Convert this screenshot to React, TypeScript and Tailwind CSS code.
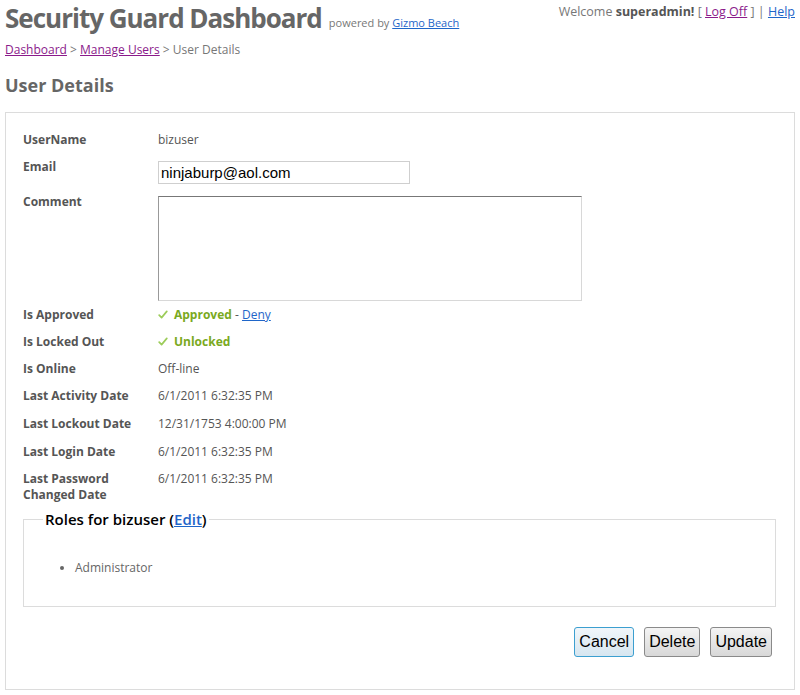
import { useState } from 'react'

const font = { fontFamily: '"Open Sans", "Noto Sans", sans-serif' }

const labelCls = 'text-[12px] font-bold text-[#555] leading-[18px]'
const valueCls = 'text-[12px] text-[#555] leading-[18px]'

function Check() {
  return (
    <svg width="10" height="9" viewBox="0 0 10 9" className="inline-block mr-[6px] -mt-[2px]">
      <path d="M1.2 5.2 L3.6 7.6 L8.8 1.4" fill="none" stroke="#9ccc5a" strokeWidth="1.7" strokeLinecap="round" strokeLinejoin="round" />
    </svg>
  )
}

function Row({ label, children, h }: { label: React.ReactNode; children: React.ReactNode; h: string }) {
  return (
    <div className={`flex ${h}`}>
      <div className={`w-[135px] shrink-0 ${labelCls}`}>{label}</div>
      <div className={`flex-1 ${valueCls}`}>{children}</div>
    </div>
  )
}

export default function App() {
  const [email, setEmail] = useState('ninjaburp@aol.com')
  const [comment, setComment] = useState('')

  return (
    <div className="w-[800px] h-[695px] bg-white text-[#666] overflow-hidden" style={font}>
      {/* header */}
      <div className="flex items-start justify-between pl-[5px] pr-[5px] pt-[1px]">
        <div className="flex items-end gap-[7px]">
          <h1 className="text-[26px] font-bold leading-[34px] text-[#666] tracking-[-1px]">
            Security Guard Dashboard
          </h1>
          <span className="text-[11px] text-[#777] mb-[4px]">
            powered by{' '}
            <a href="#" className="text-[#1f66c9] underline">Gizmo Beach</a>
          </span>
        </div>
        <div className="text-[12.5px] text-[#777] pt-[2px]">
          Welcome <span className="font-bold text-[#555]">superadmin!</span> [{' '}
          <a href="#" className="text-[#8b1a8b] underline">Log Off</a> ] |{' '}
          <a href="#" className="text-[#1f66c9] underline">Help</a>
        </div>
      </div>

      <div className="px-[5px] mt-[6px] text-[12px] text-[#777] leading-[18px]">
        <a href="#" className="text-[#8b1a8b] underline">Dashboard</a> &gt;{' '}
        <a href="#" className="text-[#8b1a8b] underline">Manage Users</a> &gt; User Details
      </div>

      <h2 className="px-[5px] mt-[13px] text-[18px] font-bold text-[#666] leading-[26px]">User Details</h2>

      {/* details box */}
      <div className="mx-[5px] mt-[14px] border border-[#dcdcdc] pl-[17px] pr-[18px] pt-[18px] pb-[32px]">
        <Row label="UserName" h="h-[27px]">
          bizuser
        </Row>
        <Row label="Email" h="h-[35px]">
          <input
            value={email}
            onChange={(e) => setEmail(e.target.value)}
            className="mt-[3px] w-[252px] h-[23px] border border-[#cfcfcf] px-[2px] text-[15px] text-black outline-none"
            style={{ fontFamily: '"Liberation Sans", Arial, sans-serif' }}
          />
        </Row>
        <Row label="Comment" h="h-[113px]">
          <textarea
            value={comment}
            onChange={(e) => setComment(e.target.value)}
            className="mt-[3px] block w-[424px] h-[105px] border border-[#d8d8d8] border-t-[#777] border-l-[#999] resize-none outline-none"
          />
        </Row>
        <Row label="Is Approved" h="h-[27px]">
          <Check />
          <span className="font-bold text-[#7aa921]">Approved</span> -{' '}
          <a href="#" className="text-[#1f66c9] underline">Deny</a>
        </Row>
        <Row label="Is Locked Out" h="h-[27px]">
          <Check />
          <span className="font-bold text-[#7aa921]">Unlocked</span>
        </Row>
        <Row label="Is Online" h="h-[27px]">
          Off-line
        </Row>
        <Row label="Last Activity Date" h="h-[28px]">
          6/1/2011 6:32:35 PM
        </Row>
        <Row label="Last Lockout Date" h="h-[28px]">
          12/31/1753 4:00:00 PM
        </Row>
        <Row label="Last Login Date" h="h-[27px]">
          6/1/2011 6:32:35 PM
        </Row>
        <Row label={<span className="block leading-[16px] pt-[1px]">Last Password<br />Changed Date</span>} h="h-[37px]">
          6/1/2011 6:32:35 PM
        </Row>

        <fieldset className="mt-[3px] border border-[#dcdcdc] pl-[19px] pr-[20px] pt-[31px] pb-[29px]">
          <legend className="px-[2px] text-[15px] font-semibold text-black leading-[18px]">
            Roles for bizuser (<a href="#" className="text-[#1f66c9] underline">Edit</a>)
          </legend>
          <ul className="list-disc pl-[32px] text-[12px] text-[#666] leading-[18px]">
            <li>Administrator</li>
          </ul>
        </fieldset>

        <div
          className="flex justify-end gap-[10px] mt-[20px] pr-[4px]"
          style={{ fontFamily: '"Liberation Sans", Arial, sans-serif' }}
        >
          <button className="h-[30px] px-[4px] text-[16px] text-black rounded-[3px] border border-[#3c9fd0] bg-gradient-to-b from-[#f1f6fa] to-[#d6e6f0]">
            Cancel
          </button>
          <button className="h-[30px] px-[4px] text-[16px] text-black rounded-[3px] border border-[#8a8a8a] bg-gradient-to-b from-[#f4f4f4] to-[#d8d8d8]">
            Delete
          </button>
          <button className="h-[30px] px-[4px] text-[16px] text-black rounded-[3px] border border-[#8a8a8a] bg-gradient-to-b from-[#f4f4f4] to-[#d8d8d8]">
            Update
          </button>
        </div>
      </div>
    </div>
  )
}
